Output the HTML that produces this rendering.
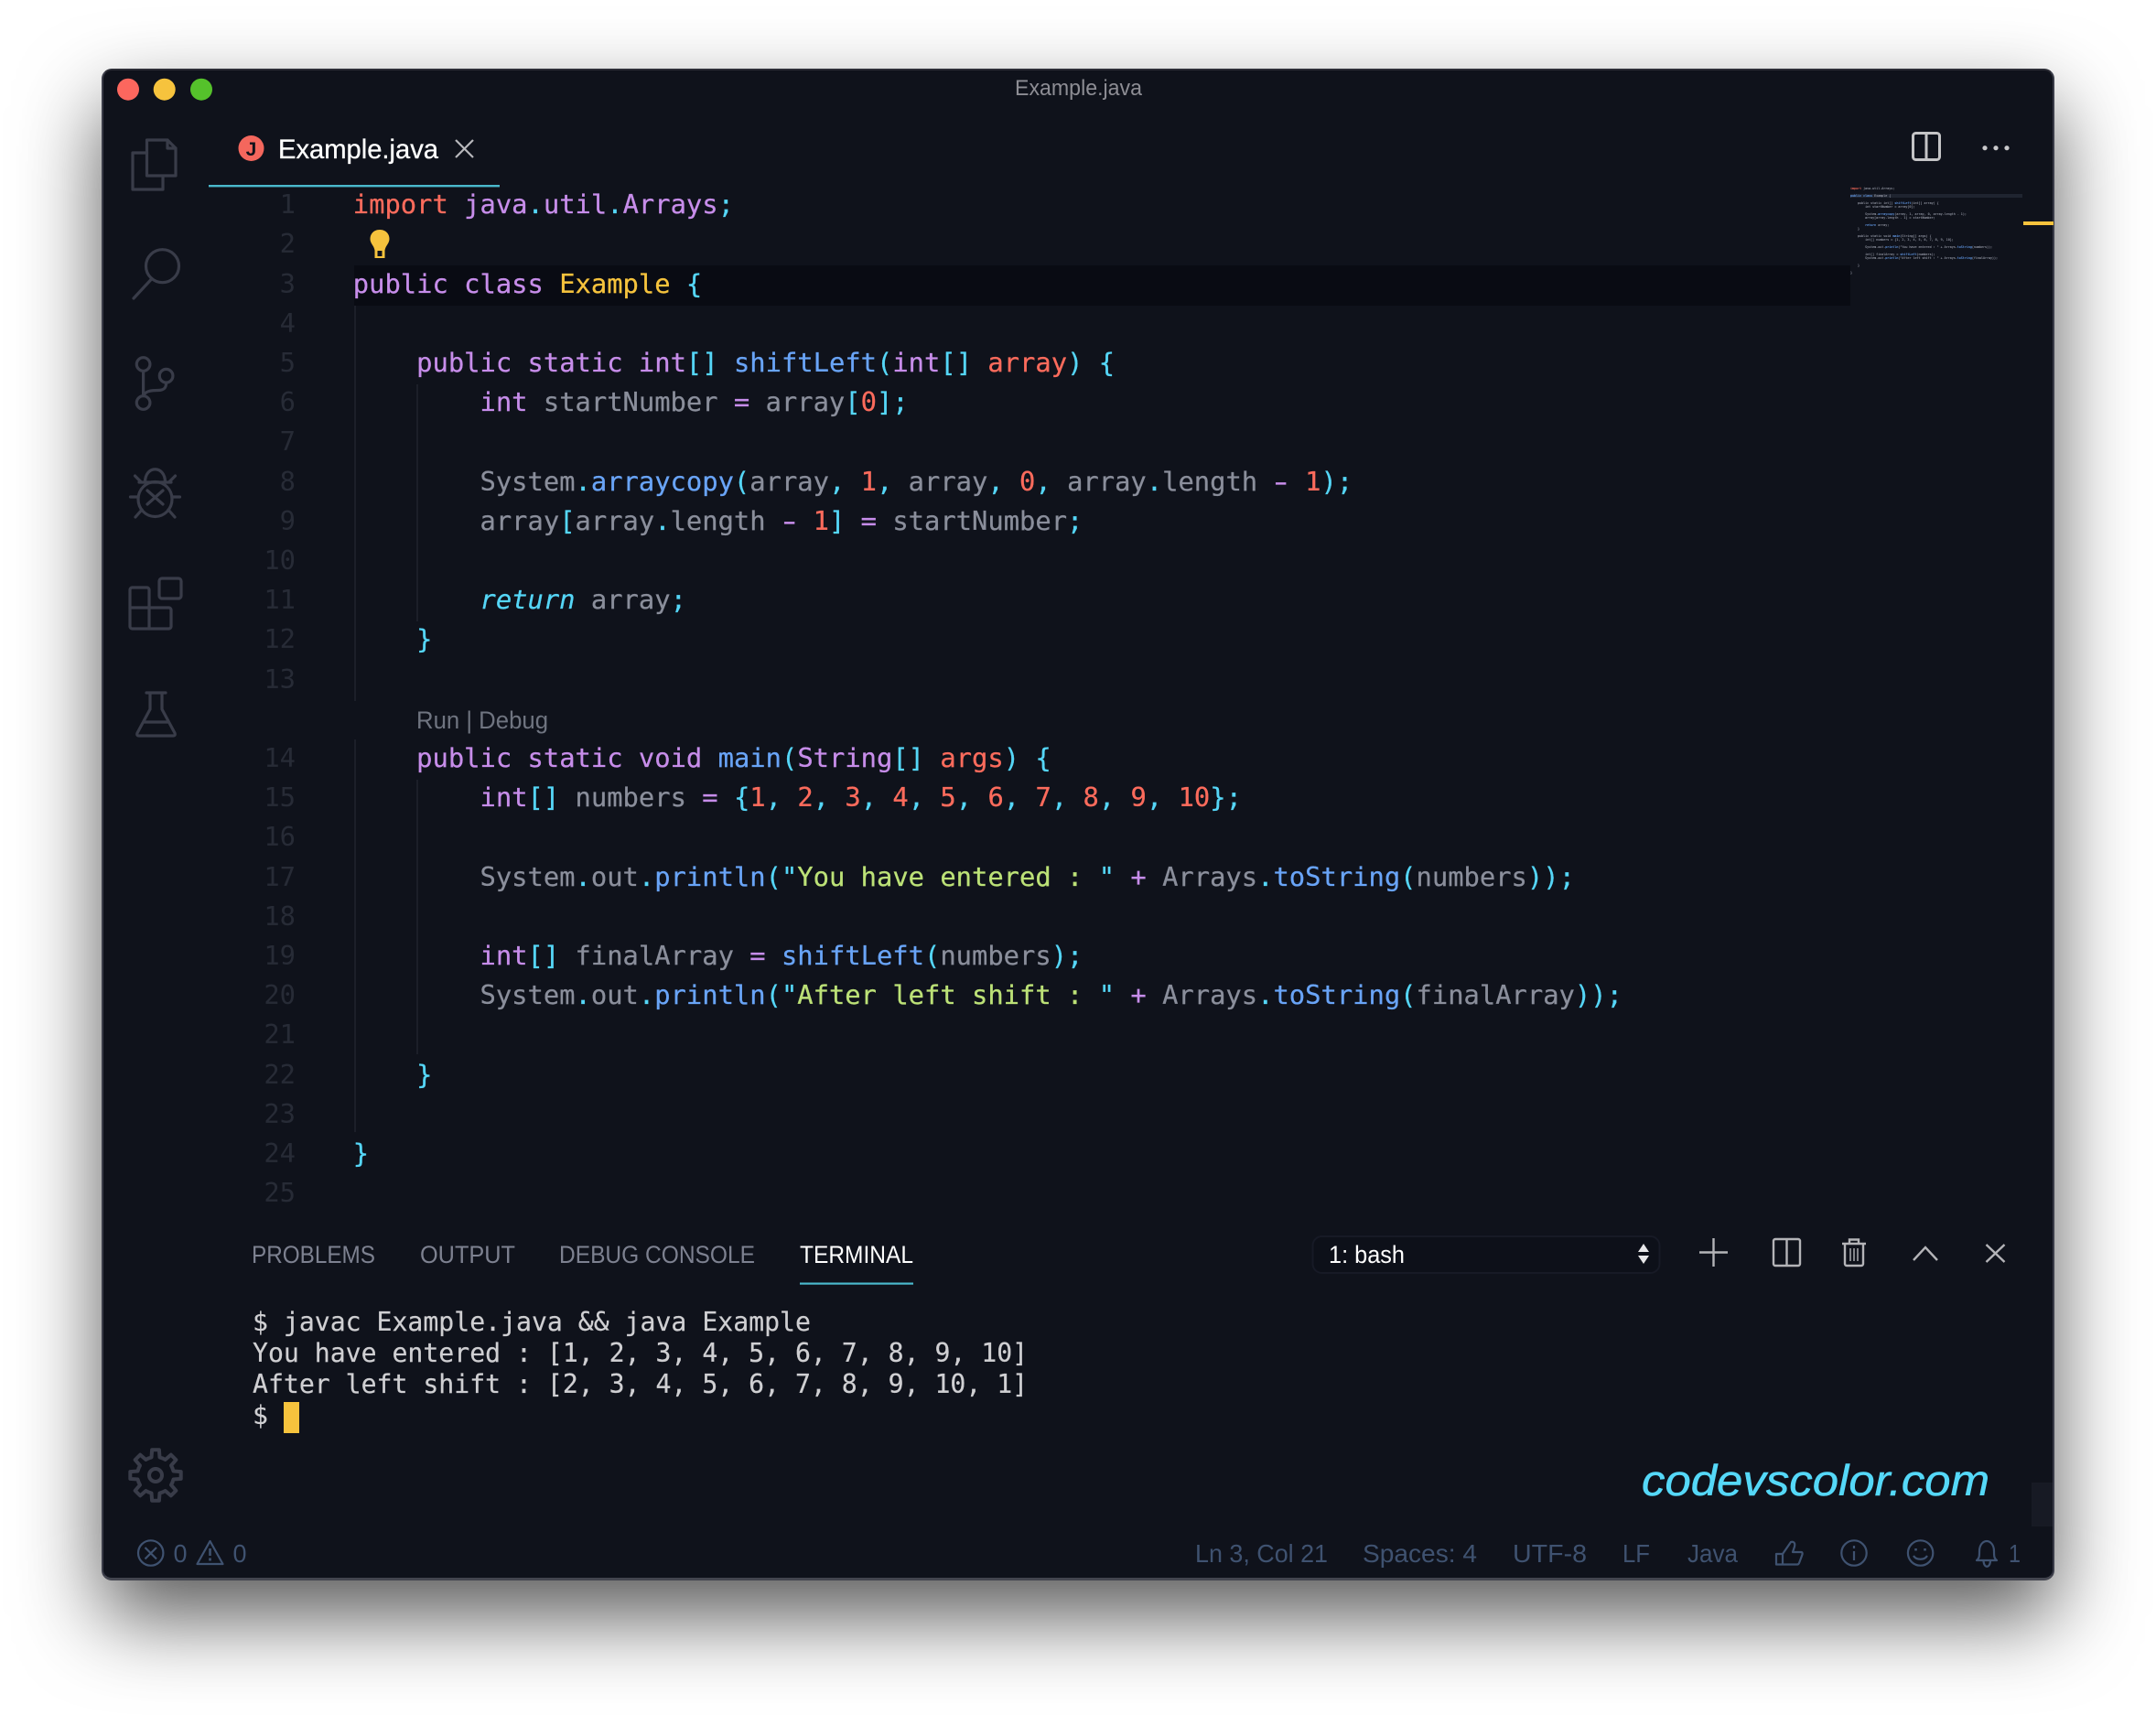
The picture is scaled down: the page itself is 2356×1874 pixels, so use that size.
<!DOCTYPE html>
<html><head><meta charset="utf-8"><style>
html,body{margin:0;padding:0;background:#fff;width:2356px;height:1874px;overflow:hidden}
#win{position:absolute;left:111px;top:75px;width:2134px;height:1652px;box-sizing:border-box;background:#0f121b;border:2px solid #3a3c48;border-top-color:#2c2d36;border-bottom:3px solid #43454f;border-radius:11px;box-shadow:0 40px 90px rgba(0,0,0,.65)}
#code{position:absolute;left:0;top:-1.4px}
.l{position:absolute;left:385.8px;white-space:pre;font:28.8px/43.2px "DejaVu Sans Mono","Liberation Mono",monospace;color:#8a8e9b;height:43.2px;-webkit-text-stroke:.25px}
.n{position:absolute;left:250px;width:73px;text-align:right;font:28.8px/43.2px "DejaVu Sans Mono","Liberation Mono",monospace;color:#272b36}
.k{color:#c78dea}.r{color:#fb6b5c}.c{color:#55d6f7}.y{color:#f6c33d}.b{color:#69a4f7}.g{color:#bce177}
.m{display:inline-block;transform:scaleX(1.5);color:#c78dea}
.i{font-style:italic;color:#55d6f7}
#t{position:absolute;left:276px;top:1427.500px;white-space:pre;font:28.15px/34px "DejaVu Sans Mono","Liberation Mono",monospace;color:#cfcfd2;-webkit-text-stroke:.2px}
#mm{position:absolute;left:2022px;top:203.7px;white-space:pre;font:3.35px/4px "DejaVu Sans Mono","Liberation Mono",monospace;color:#9a9eab;-webkit-text-stroke:.08px}
svg{position:absolute;left:0;top:0}
</style></head><body>
<div id="win"></div>
<div style="position:absolute;left:387px;top:290px;width:1635px;height:44px;background:#090b13"></div>
<div style="position:absolute;left:2022px;top:212px;width:188px;height:4px;background:#1f2430"></div>
<div style="position:absolute;left:2211px;top:242px;width:33px;height:4px;background:#f6c33d"></div>
<div style="position:absolute;left:2220px;top:1620px;width:23px;height:48px;background:#171a24"></div>
<div style="position:absolute;left:387px;top:334px;width:2px;height:432px;background:#1c1f29"></div>
<div style="position:absolute;left:387px;top:808px;width:2px;height:429px;background:#1c1f29"></div>
<div style="position:absolute;left:455px;top:420px;width:2px;height:259px;background:#1c1f29"></div>
<div style="position:absolute;left:455px;top:852px;width:2px;height:300px;background:#1c1f29"></div>

<div id="code">
<div class="n" style="top:203.6px">1</div><div class="n" style="top:246.8px">2</div><div class="n" style="top:290px">3</div><div class="n" style="top:333.2px">4</div><div class="n" style="top:376.4px">5</div><div class="n" style="top:419.6px">6</div><div class="n" style="top:462.8px">7</div><div class="n" style="top:506px">8</div><div class="n" style="top:549.2px">9</div><div class="n" style="top:592.4px">10</div><div class="n" style="top:635.6px">11</div><div class="n" style="top:678.8px">12</div><div class="n" style="top:722px">13</div><div class="n" style="top:808.4px">14</div><div class="n" style="top:851.6px">15</div><div class="n" style="top:894.8px">16</div><div class="n" style="top:938px">17</div><div class="n" style="top:981.2px">18</div><div class="n" style="top:1024.4px">19</div><div class="n" style="top:1067.6px">20</div><div class="n" style="top:1110.8px">21</div><div class="n" style="top:1154px">22</div><div class="n" style="top:1197.2px">23</div><div class="n" style="top:1240.4px">24</div><div class="n" style="top:1283.6px">25</div>

<div class="l" style="top:203.6px"><span class="r">import</span> <span class="k">java</span><span class="c">.</span><span class="k">util</span><span class="c">.</span><span class="k">Arrays</span><span class="c">;</span></div>
<div class="l" style="top:290px"><span class="k">public</span> <span class="k">class</span> <span class="y">Example</span> <span class="c">{</span></div>
<div class="l" style="top:376.4px">    <span class="k">public</span> <span class="k">static</span> <span class="k">int</span><span class="c">[]</span> <span class="b">shiftLeft</span><span class="c">(</span><span class="k">int</span><span class="c">[]</span> <span class="r">array</span><span class="c">)</span> <span class="c">{</span></div>
<div class="l" style="top:419.6px">        <span class="k">int</span> startNumber <span class="k">=</span> array<span class="c">[</span><span class="r">0</span><span class="c">];</span></div>
<div class="l" style="top:506px">        System<span class="c">.</span><span class="b">arraycopy</span><span class="c">(</span>array<span class="c">,</span> <span class="r">1</span><span class="c">,</span> array<span class="c">,</span> <span class="r">0</span><span class="c">,</span> array<span class="c">.</span>length <span class="m">-</span> <span class="r">1</span><span class="c">);</span></div>
<div class="l" style="top:549.2px">        array<span class="c">[</span>array<span class="c">.</span>length <span class="m">-</span> <span class="r">1</span><span class="c">]</span> <span class="k">=</span> startNumber<span class="c">;</span></div>
<div class="l" style="top:635.6px">        <span class="i">return</span> array<span class="c">;</span></div>
<div class="l" style="top:678.8px">    <span class="c">}</span></div>
<div class="l" style="top:808.4px">    <span class="k">public</span> <span class="k">static</span> <span class="k">void</span> <span class="b">main</span><span class="c">(</span><span class="k">String</span><span class="c">[]</span> <span class="r">args</span><span class="c">)</span> <span class="c">{</span></div>
<div class="l" style="top:851.6px">        <span class="k">int</span><span class="c">[]</span> numbers <span class="k">=</span> <span class="c">{</span><span class="r">1</span><span class="c">,</span> <span class="r">2</span><span class="c">,</span> <span class="r">3</span><span class="c">,</span> <span class="r">4</span><span class="c">,</span> <span class="r">5</span><span class="c">,</span> <span class="r">6</span><span class="c">,</span> <span class="r">7</span><span class="c">,</span> <span class="r">8</span><span class="c">,</span> <span class="r">9</span><span class="c">,</span> <span class="r">10</span><span class="c">};</span></div>
<div class="l" style="top:938px">        System<span class="c">.</span>out<span class="c">.</span><span class="b">println</span><span class="c">("</span><span class="g">You have entered : </span><span class="c">"</span> <span class="k">+</span> Arrays<span class="c">.</span><span class="b">toString</span><span class="c">(</span>numbers<span class="c">));</span></div>
<div class="l" style="top:1024.4px">        <span class="k">int</span><span class="c">[]</span> finalArray <span class="k">=</span> <span class="b">shiftLeft</span><span class="c">(</span>numbers<span class="c">);</span></div>
<div class="l" style="top:1067.6px">        System<span class="c">.</span>out<span class="c">.</span><span class="b">println</span><span class="c">("</span><span class="g">After left shift : </span><span class="c">"</span> <span class="k">+</span> Arrays<span class="c">.</span><span class="b">toString</span><span class="c">(</span>finalArray<span class="c">));</span></div>
<div class="l" style="top:1154px">    <span class="c">}</span></div>
<div class="l" style="top:1240.4px"><span class="c">}</span></div>
</div>

<div id="mm"><span class="r">import</span> java.util.Arrays;

<span class="b">public class</span> Example {

    public static int[] <span class="b">shiftLeft</span>(int[] array) {
        int startNumber = array[0];

        System.<span class="b">arraycopy</span>(array, 1, array, 0, array.length - 1);
        array[array.length - 1] = startNumber;

        <span class="b">return</span> array;
    }

    public static void <span class="b">main</span>(String[] args) {
        int[] numbers = {1, 2, 3, 4, 5, 6, 7, 8, 9, 10};

        System.out.<span class="b">println</span>("You have entered : " + Arrays.<span class="b">toString</span>(numbers));

        int[] finalArray = <span class="b">shiftLeft</span>(numbers);
        System.out.<span class="b">println</span>("After left shift : " + Arrays.<span class="b">toString</span>(finalArray));

    }

}</div>

<div id="t">$ javac Example.java &amp;&amp; java Example
You have entered : [1, 2, 3, 4, 5, 6, 7, 8, 9, 10]
After left shift : [2, 3, 4, 5, 6, 7, 8, 9, 10, 1]
$ </div>
<div style="position:absolute;left:310px;top:1532px;width:17px;height:34px;background:#f6c33d"></div>

<svg width="2356" height="1874" viewBox="0 0 2356 1874" xmlns="http://www.w3.org/2000/svg" font-family="'Liberation Sans',sans-serif">
<!-- traffic lights -->
<circle cx="140" cy="97.7" r="12" fill="#fc675e"/><circle cx="179.7" cy="97.7" r="12" fill="#f6c33d"/><circle cx="220" cy="97.7" r="12" fill="#55c22b"/>
<text x="1109" y="104" font-size="24" fill="#8d8d94" textLength="139" lengthAdjust="spacingAndGlyphs">Example.java</text>
<!-- tab -->
<circle cx="274.5" cy="162" r="14" fill="#f4675d"/>
<text x="274.5" y="170" font-size="21" font-weight="bold" text-anchor="middle" fill="#0f121b">J</text>
<text x="304" y="173" font-size="30" fill="#ffffff" stroke="#ffffff" stroke-width=".3" textLength="175" lengthAdjust="spacingAndGlyphs">Example.java</text>
<path d="M498 153L517 172M517 153L498 172" stroke="#b8b8bc" stroke-width="2.2" fill="none"/>
<rect x="228" y="202" width="318" height="2.4" fill="#4ab8cc"/>
<!-- top right -->
<rect x="2090.5" y="145.5" width="29" height="29" rx="3" fill="none" stroke="#c4c4c6" stroke-width="3"/><path d="M2105 145v30" stroke="#c4c4c6" stroke-width="3"/>
<circle cx="2169" cy="161.7" r="2.6" fill="#c9c9cb"/><circle cx="2181" cy="161.7" r="2.6" fill="#c9c9cb"/><circle cx="2193" cy="161.7" r="2.6" fill="#c9c9cb"/>
<!-- activity icons -->
<g fill="none" stroke="#393c49" stroke-width="3.2" stroke-linejoin="round" stroke-linecap="round">
<path d="M160.500 153h22.500l9 9v30h-31.500z"/><path d="M183 153v9h9"/><path d="M160.500 167h-15.500v40h33v-14"/>
<circle cx="177.500" cy="290.700" r="18"/><path d="M165.500 305L146 326"/>
<circle cx="156.600" cy="398" r="7.300"/><circle cx="156.600" cy="440" r="7.300"/><circle cx="181.600" cy="410.700" r="7.300"/><path d="M156.600 406v26"/><path d="M181.600 418.500c0 6-3 8-9 8c-8 0-14 1-16 6"/>
<path d="M158.500 527c0-19 22-19 22 0"/><ellipse cx="169.500" cy="545.500" rx="18.500" ry="19"/><path d="M152 527h35"/><path d="M161 536l17 15M178 536l-17 15"/><path d="M147.500 520l6 6M191.500 520l-6 6M142.500 543h8M188.500 543h8M148 565l7-8M191 565l-7-8"/>
<path d="M163 664h21.500a2.500 2.500 0 0 1 2.500 2.500v18a2.500 2.500 0 0 1-2.500 2.500h-40a2.500 2.500 0 0 1-2.500-2.500v-40a2.500 2.500 0 0 1 2.500-2.500h16a2.500 2.500 0 0 1 2.500 2.500z"/><path d="M142 664h21v23"/><rect x="174" y="632" width="24" height="22" rx="3"/>
<path d="M160 757h21M164 757v18l-14 26q-1 3 2 3h37q3 0 2-3l-14-26v-18M157 789h26"/>
<g transform="translate(170 1612)" stroke-width="4"><circle r="7"/>
<path d="M-7.650-18.480L-4.500-19.500L-3.900-27.700L3.900-27.700L4.500-19.500L7.650-18.480"/>
<path transform="rotate(45)" d="M-7.650-18.480L-4.500-19.500L-3.900-27.700L3.900-27.700L4.500-19.500L7.650-18.480"/>
<path transform="rotate(90)" d="M-7.650-18.480L-4.500-19.500L-3.900-27.700L3.900-27.700L4.500-19.500L7.650-18.480"/>
<path transform="rotate(135)" d="M-7.650-18.480L-4.500-19.500L-3.900-27.700L3.900-27.700L4.500-19.500L7.650-18.480"/>
<path transform="rotate(180)" d="M-7.650-18.480L-4.500-19.500L-3.900-27.700L3.900-27.700L4.500-19.500L7.650-18.480"/>
<path transform="rotate(225)" d="M-7.650-18.480L-4.500-19.500L-3.900-27.700L3.900-27.700L4.500-19.500L7.650-18.480"/>
<path transform="rotate(270)" d="M-7.650-18.480L-4.500-19.500L-3.900-27.700L3.900-27.700L4.500-19.500L7.650-18.480"/>
<path transform="rotate(315)" d="M-7.650-18.480L-4.500-19.500L-3.900-27.700L3.900-27.700L4.500-19.500L7.650-18.480"/>
</g>
</g>
<!-- lightbulb -->
<path d="M415 251c6.500 0 10.500 4.500 10.500 10c0 5-4 7-5 12.500v8.500h-11v-8.500c-1-5.500-5-7.500-5-12.500c0-5.500 4-10 10.500-10z" fill="#f6c33d"/><rect x="412.500" y="274" width="5" height="6" fill="#0f121b"/>
<!-- run debug -->
<text x="455" y="796" font-size="26.500" fill="#6f7480" textLength="144" lengthAdjust="spacingAndGlyphs">Run | Debug</text>
<!-- panel tabs -->
<g font-size="27">
<text x="275" y="1380" fill="#7d8190" textLength="135" lengthAdjust="spacingAndGlyphs">PROBLEMS</text>
<text x="459" y="1380" fill="#7d8190" textLength="104" lengthAdjust="spacingAndGlyphs">OUTPUT</text>
<text x="611" y="1380" fill="#7d8190" textLength="214" lengthAdjust="spacingAndGlyphs">DEBUG CONSOLE</text>
<text x="874" y="1380" fill="#ffffff" textLength="124" lengthAdjust="spacingAndGlyphs">TERMINAL</text>
</g>
<rect x="874" y="1401.500" width="124" height="2.200" fill="#4ab8cc"/>
<!-- dropdown -->
<rect x="1434.500" y="1351" width="379" height="40" rx="10" fill="#0d1019" stroke="#171a26" stroke-width="2"/>
<text x="1452" y="1380" font-size="27" fill="#ffffff" textLength="83" lengthAdjust="spacingAndGlyphs">1: bash</text>
<path d="M1796 1359l6 9h-12zM1796 1381l6-9h-12z" fill="#e8e8ea"/>
<g fill="none" stroke="#b4b4b8" stroke-width="2.400">
<path d="M1857 1368.500h31M1872.500 1353v31"/>
<rect x="1938" y="1354" width="29" height="29" rx="2"/><path d="M1952.500 1354v29"/>
<path d="M2013 1359h26M2021 1359v-4.500h10v4.500M2016 1359v22a2 2 0 0 0 2 2h16a2 2 0 0 0 2-2v-22"/><path d="M2022 1364v14M2026 1364v14M2030 1364v14" stroke-width="1.400"/>
<path d="M2091 1377l13-14l13 14"/>
<path d="M2170.500 1360l20 19M2190.500 1360l-20 19"/>
</g>
<!-- watermark -->
<text x="1794" y="1634" font-style="italic" font-size="47" fill="#55d8f8" stroke="#55d8f8" stroke-width=".5" textLength="380" lengthAdjust="spacingAndGlyphs">codevscolor.com</text>
<!-- status bar -->
<g fill="#3f5270" font-size="28">
<text x="189.500" y="1707" textLength="15" lengthAdjust="spacingAndGlyphs">0</text>
<text x="254.500" y="1707" textLength="15" lengthAdjust="spacingAndGlyphs">0</text>
<text x="1306" y="1707" textLength="145" lengthAdjust="spacingAndGlyphs">Ln 3, Col 21</text>
<text x="1489" y="1707" textLength="125" lengthAdjust="spacingAndGlyphs">Spaces: 4</text>
<text x="1653" y="1707" textLength="81" lengthAdjust="spacingAndGlyphs">UTF-8</text>
<text x="1773" y="1707" textLength="30" lengthAdjust="spacingAndGlyphs">LF</text>
<text x="1844" y="1707" textLength="55" lengthAdjust="spacingAndGlyphs">Java</text>
<text x="2195" y="1707" textLength="13" lengthAdjust="spacingAndGlyphs">1</text>
</g>
<g fill="none" stroke="#3f5270" stroke-width="2.200" stroke-linejoin="round">
<circle cx="164.700" cy="1697" r="13.700"/><path d="M158.500 1691l12.500 12.500M171 1691l-12.500 12.500"/>
<path d="M229.500 1684l14 25h-28z"/><path d="M229.500 1692v8M229.500 1702.500v3" stroke-width="2.600"/>
<path d="M1941 1698h7l9-13c3-1 5 1 4 5l-2 6h9c2 0 2 2 1 4l-3 8c-.5 1-1 1.500-2 1.500h-23z"/><path d="M1948 1698v11"/>
<circle cx="2026" cy="1697" r="13.700"/><path d="M2026 1695v10M2026 1689v3"/>
<circle cx="2098.600" cy="1697" r="13.700"/><path d="M2091 1700c3 5 12 5 15 0"/><path d="M2093.500 1692v2.500M2103.500 1692v2.500" stroke-width="2.600"/>
<path d="M2160 1705c3-2 3-5 3-10c0-7 4-11 8-11s8 4 8 11c0 5 0 8 3 10zM2167.500 1705c0 9 7.500 9 7.500 0"/>
</g>
</svg>
</body></html>
